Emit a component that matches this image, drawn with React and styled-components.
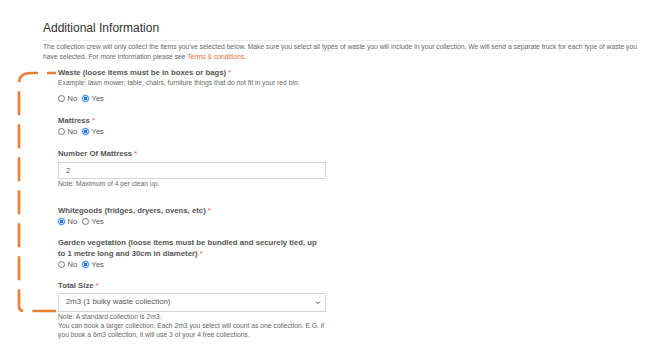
import styled, { createGlobalStyle } from 'styled-components';

const GlobalStyle = createGlobalStyle`
  html, body {
    margin: 0;
    padding: 0;
    background: #ffffff;
  }
  body {
    font-family: 'Liberation Sans', Arial, sans-serif;
    color: #555;
  }
`;

const Page = styled.div`
  position: relative;
  width: 647px;
  height: 358px;
  overflow: hidden;
  padding: 20px 9px 0 43px;
  box-sizing: border-box;
`;

const Heading = styled.h2`
  margin: 0;
  font-size: 12px;
  line-height: 16px;
  font-weight: 400;
  color: #333;
`;

const Divider = styled.hr`
  margin: 3.5px 0 1.5px;
  border: 0;
  border-top: 1px solid #ececec;
`;

const Intro = styled.p`
  margin: 0;
  font-size: 6.75px;
  line-height: 10px;
  color: #666;
  white-space: nowrap;

  a {
    color: #f26b3a;
    text-decoration: none;
  }
`;

const Fields = styled.div`
  padding-left: 15px;
  padding-top: 4.5px;
  width: 268px;
`;

const Group = styled.div`
  margin-bottom: ${p => p.$gap || 11}px;
`;

const Label = styled.div`
  font-size: 7.75px;
  line-height: 11px;
  font-weight: 700;
  color: #555;
  white-space: nowrap;

  span {
    color: #e2574c;
    font-weight: 400;
  }
`;

const Help = styled.div`
  font-size: 6.75px;
  line-height: ${p => p.$lh || 10}px;
  color: #666;
  white-space: nowrap;
`;

const RadioRow = styled.div`
  display: flex;
  align-items: center;
  gap: 5px;
  height: 11px;
  margin-top: ${p => p.$top || 0}px;
`;

const RadioOption = styled.label`
  display: flex;
  align-items: center;
  gap: 2.5px;
  font-size: 7.5px;
  color: #555;
`;

const Dot = styled.span`
  width: 5px;
  height: 5px;
  border-radius: 50%;
  border: 0.8px solid ${p => (p.$on ? '#1a73e8' : '#767676')};
  background: ${p => (p.$on ? 'radial-gradient(circle, #1a73e8 0 1.6px, #fff 1.7px)' : '#fff')};
  box-shadow: ${p => (p.$on ? '0 0 0 0.6px rgba(26,115,232,0.35)' : 'none')};
`;

const TextInput = styled.div`
  margin-top: 2.5px;
  height: 17px;
  border: 1px solid #d4d4d4;
  box-sizing: border-box;
  padding-left: 7px;
  font-size: 7.5px;
  line-height: 15px;
  color: #555;
`;

const SelectBox = styled.div`
  position: relative;
  margin-top: 2px;
  height: 18.5px;
  border: 1px solid #d4d4d4;
  box-sizing: border-box;
  padding-left: 7px;
  font-size: 7.8px;
  line-height: 16.5px;
  color: #555;
`;

const Chevron = styled.svg`
  position: absolute;
  right: 4px;
  top: 6px;
`;

const Bracket = styled.svg`
  position: absolute;
  left: 0;
  top: 0;
  pointer-events: none;
`;

const Req = () => <span> *</span>;

function Radios({ value, top }) {
  return (
    <RadioRow $top={top}>
      <RadioOption><Dot $on={value === 'No'} />No</RadioOption>
      <RadioOption><Dot $on={value === 'Yes'} />Yes</RadioOption>
    </RadioRow>
  );
}

export default function App() {
  return (
    <>
      <GlobalStyle />
      <Page>
        <Heading>Additional Information</Heading>
        <Divider />
        <Intro>
          The collection crew will only collect the items you've selected below. Make sure you select all types of waste you will include in your collection. We will send a separate truck for each type of waste you
          <br />
          have selected. For more information please see <a href="#">Terms &amp; conditions</a>.
        </Intro>
        <Fields>
          <Group $gap={11}>
            <Label>Waste (loose items must be in boxes or bags)<Req /></Label>
            <Help>Example: lawn mower, table, chairs, furniture things that do not fit in your red bin.</Help>
            <Radios value="Yes" top={5.5} />
          </Group>
          <Group $gap={11}>
            <Label>Mattress<Req /></Label>
            <Radios value="Yes" />
          </Group>
          <Group $gap={16.5}>
            <Label>Number Of Mattress<Req /></Label>
            <TextInput>2</TextInput>
            <Help $lh={9.5}>Note: Maximum of 4 per clean up.</Help>
          </Group>
          <Group $gap={10.3}>
            <Label>Whitegoods (fridges, dryers, ovens, etc)<Req /></Label>
            <Radios value="No" />
          </Group>
          <Group $gap={10.4}>
            <Label>
              Garden vegetation (loose items must be bundled and securely tied, up
              <br />
              to 1 metre long and 30cm in diameter)<Req />
            </Label>
            <Radios value="Yes" />
          </Group>
          <Group>
            <Label>Total Size<Req /></Label>
            <SelectBox>
              2m3 (1 bulky waste collection)
              <Chevron width="6" height="5" viewBox="0 0 6 5">
                <path d="M1 1.5 L3 3.5 L5 1.5" fill="none" stroke="#444" strokeWidth="1" />
              </Chevron>
            </SelectBox>
            <Help $lh={9.3}>
              Note: A standard collection is 2m3.
              <br />
              You can book a larger collection. Each 2m3 you select will count as one collection. E.G. if
              <br />
              you book a 6m3 collection, it will use 3 of your 4 free collections.
            </Help>
          </Group>
        </Fields>
        <Bracket width="647" height="358" viewBox="0 0 647 358">
          <path
            d="M56 73 H30 Q19 73 19 84 V306 Q19 311 24 311 H56"
            fill="none"
            stroke="#ed7d31"
            strokeWidth="2.6"
            strokeDasharray="24 9"
            strokeDashoffset="15"
          />
        </Bracket>
      </Page>
    </>
  );
}
